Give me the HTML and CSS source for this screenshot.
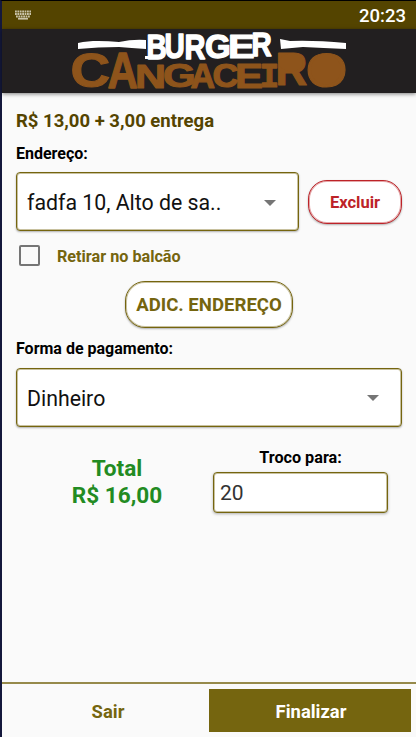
FILE: index.html
```html
<!DOCTYPE html>
<html lang="pt-BR">
<head>
<meta charset="utf-8">
<title>Burger Cangaceiro</title>
<link rel="stylesheet" href="styles.css">
</head>
<body>
<div class="app">
  <div class="status">
    <svg class="keyboard" width="18" height="11" viewBox="0 0 18 11">
      <path d="M1 1.5H17M1 4H17M2 6.500H16" stroke-dasharray="1.8 .6"/>
      <path d="M4 8.700H14"/>
    </svg>
    <span class="clock">20:23</span>
  </div>
  <header class="header">
    <svg class="logo" width="280" height="64" viewBox="70 29 280 64">
      <g class="brown">
        <text transform="translate(70.500 87) scale(5.500 4.8)">C</text>
        <text transform="translate(107.500 87.500) scale(4.2 5)">A</text>
        <text transform="translate(135 87.500) scale(4.3 3.4)">N</text>
        <text transform="translate(163 87) scale(4.2 3.3)">G</text>
        <text transform="translate(190.500 87.500) scale(3.4 3.500)">A</text>
        <text transform="translate(212.500 87) scale(3.6 3.3)">C</text>
        <text transform="translate(235 87.500) scale(4.2 3.500)">E</text>
        <text class="slab" transform="translate(259.500 87) scale(3.3 3.2)">I</text>
        <text transform="translate(275.500 84.500) scale(4.4 4.7)">R</text>
        <ellipse cx="291" cy="62.500" rx="12" ry="9"/>
        <text transform="translate(306 87) scale(5.3 4.85)">O</text>
        <ellipse cx="326" cy="69.500" rx="15" ry="15"/>
      </g>
      <g class="light">
        <path d="M78 43C91 40 105 41 119 42Q133 39 146 40L146 49Q131 48 119 47Q98 47 78 49Z"/>
        <path d="M280 39L290 41Q313 40 346 43L346 49Q323 48 303 47L281 49Z"/>
        <path d="M145 56H154V59H145Z"/>
        <text transform="translate(146.500 58.500) scale(2.8 3.5)">B</text>
        <text transform="translate(164.500 58) scale(2.8 3.5)">U</text>
        <text transform="translate(184.500 58.500) scale(2.9 3.5)">R</text>
        <text transform="translate(205 57.500) scale(3.3 3.250)">G</text>
        <text transform="translate(228 58) scale(4 3.3)">E</text>
        <text transform="translate(251.500 56) scale(2.8 3.3)">R</text>
      </g>
    </svg>
  </header>
  <main class="content">
    <div class="summary">R$ 13,00 + 3,00 entrega</div>
    <div class="label">Endereço:</div>
    <div class="address-row">
      <div class="select address"><span>fadfa 10, Alto de sa..</span><i class="caret"></i></div>
      <button class="pill delete">Excluir</button>
    </div>
    <div class="check-row"><i class="box"></i><span>Retirar no balcão</span></div>
    <button class="pill add">ADIC. ENDEREÇO</button>
    <div class="label pay-label">Forma de pagamento:</div>
    <div class="select payment"><span>Dinheiro</span><i class="caret"></i></div>
    <div class="totals">
      <div class="total">Total<br>R$ 16,00</div>
      <div class="change">
        <div class="label">Troco para:</div>
        <div class="input">20</div>
      </div>
    </div>
  </main>
  <footer class="footer">
    <button class="exit">Sair</button>
    <button class="finish">Finalizar</button>
  </footer>
</div>
</body>
</html>
```
FILE: styles.css
```css
* { box-sizing: border-box; }
body { margin: 0; font-family: Roboto, sans-serif; background: #fafafa; }
button { font-family: inherit; font-weight: 700; padding: 0; margin: 0; }
.app { height: 737px; display: flex; flex-direction: column; border-left: 2px solid #14183c; border-top: 1px solid #000; }
.status { height: 28px; flex: none; background: #544400; display: flex; justify-content: space-between; align-items: center; padding: 0 10px 0 12px; }
.keyboard { fill: none; stroke: #c9c3a9; stroke-width: 1.8; }
.clock { color: #fff; font-size: 18.5px; font-weight: 500; line-height: 28px; padding-top: 1px; }
.header { height: 64px; flex: none; background: #221f20; box-shadow: 0 1px 4px rgba(0,0,0,.5); padding-left: 68px; }
.logo { display: block; font: 700 10px "Liberation Sans", sans-serif; }
.logo text { vector-effect: non-scaling-stroke; stroke-linejoin: round; }
.light { fill: #fff; }
.light text { stroke: #fff; stroke-width: 1.3px; }
.brown { fill: #8e541b; }
.brown text { stroke: #8e541b; stroke-width: 1.2px; }
.slab { font-family: "DejaVu Sans Mono", monospace; }
.content { flex: 1; padding: 15px 14px 0; display: flex; flex-direction: column; }
.summary { color: #544400; font-size: 18.5px; font-weight: 700; line-height: 24px; padding-top: 1px; }
.label { color: #000; font-size: 16px; font-weight: 700; line-height: 20px; }
.summary + .label { margin-top: 11px; }
.address-row { display: flex; align-items: center; gap: 9px; margin-top: 8px; }
.select { height: 59px; display: flex; align-items: center; justify-content: space-between; border: 1px solid #75650f; border-radius: 4px; background: #fff; box-shadow: inset 0 0 0 1px rgba(117,101,15,.4), 0 1px 2px rgba(0,0,0,.3); padding: 2px 22px 0 10px; font-size: 21.3px; color: #111; }
.address { width: 283px; }
.caret { border: 6px solid transparent; border-top-color: #757575; border-bottom: 0; }
.pill { background: #fff; border: 1px solid; box-shadow: inset 0 0 0 1px rgba(117,101,15,.4), 0 1px 2px rgba(0,0,0,.3); }
.delete { width: 94px; height: 44px; border-radius: 19px; color: #bd2328; font-size: 16.5px; box-shadow: inset 0 0 0 1px rgba(189,35,40,.4), 0 1px 2px rgba(0,0,0,.3); }
.address-row .delete { padding-top: 1px; }
.check-row { display: flex; align-items: center; height: 24px; margin-top: 12px; padding-left: 3px; gap: 17px; color: #75650f; font-size: 16.2px; font-weight: 700; }
.check-row span { padding-top: 3px; }
.box { width: 21px; height: 21px; border: 2px solid #757575; border-radius: 2px; }
.add { width: 168px; height: 47px; align-self: center; margin-top: 14px; border-radius: 20px; color: #75650f; font-size: 18.6px; padding-top: 1px; }
.pay-label { margin-top: 11px; }
.payment { margin-top: 9px; border-top-width: 1px; padding-bottom: 1px; }
.totals { display: flex; margin-top: 20px; }
.total { width: 202px; text-align: center; color: #228b22; font-size: 22.6px; font-weight: 700; line-height: 27px; padding-top: 8px; }
.change { width: 175px; margin-left: -5px; text-align: center; }
.input { height: 41px; margin-top: 4px; border: 1px solid #75650f; border-radius: 4px; background: #fff; box-shadow: inset 0 0 0 1px rgba(117,101,15,.4), 0 1px 3px rgba(0,0,0,.3); text-align: left; padding-left: 6px; font-size: 21px; line-height: 41px; color: #333; }
.totals .label { padding-top: 1px; font-size: 16.2px; }
.footer { height: 55px; flex: none; border-top: 2px solid #968a4b; display: flex; padding: 5px 5px 5px 0; }
.footer button { border: 0; font-size: 18.4px; padding-top: 1px; }
.footer .exit { width: 207px; padding-left: 5px; background: none; color: #75650f; }
.footer .finish { flex: 1; background: #75650f; color: #fff; padding-left: 2px; }
```
